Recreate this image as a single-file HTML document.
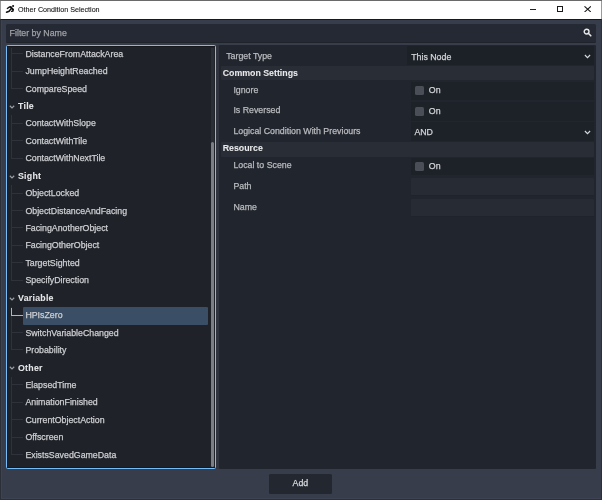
<!DOCTYPE html>
<html><head><meta charset="utf-8"><style>
html,body{margin:0;padding:0;width:602px;height:500px;overflow:hidden;background:#373d4a}
.r{position:absolute}
.t{position:absolute;white-space:nowrap;-webkit-text-stroke:0.25px currentColor;font-family:"Liberation Sans",sans-serif}
</style></head><body><div id="w" style="position:absolute;left:0;top:0;width:602px;height:500px;will-change:transform">
<div class="r" style="left:0.00px;top:0.00px;width:602.00px;height:500.00px;background:#373d4a;"></div>
<div class="r" style="left:0.00px;top:0.00px;width:602.00px;height:19.00px;background:#ffffff;"></div>
<div class="r" style="left:0.00px;top:19.00px;width:602.00px;height:1.00px;background:#131826;"></div>
<div class="r" style="left:0.00px;top:0.00px;width:1.00px;height:500.00px;background:#2b2f37;"></div>
<div class="r" style="left:601.00px;top:0.00px;width:1.00px;height:500.00px;background:#2b2f37;"></div>
<div class="r" style="left:601.00px;top:0.00px;width:1.00px;height:19.00px;background:#9a9a9a;"></div>
<div class="r" style="left:0.00px;top:0.00px;width:1.00px;height:19.00px;background:#9a9a9a;"></div>
<div class="r" style="left:0.00px;top:499.00px;width:602.00px;height:1.00px;background:#2b2f37;"></div>
<div class="r" style="left:1.00px;top:498.00px;width:600.00px;height:1.00px;background:#3d4352;"></div>
<div class="r" style="left:1.00px;top:20.00px;width:1.00px;height:478.00px;background:#3d4352;"></div>
<div class="r" style="left:0.00px;top:0.00px;width:602.00px;height:1.00px;background:#6a6a6a;"></div>
<svg class="r" style="left:4px;top:3px" width="13" height="13" viewBox="0 0 13 13">
<circle cx="9.1" cy="3.0" r="1.05" fill="#111"/>
<path d="M3.3 5.5 L5.6 3.9 L7.3 4.1" stroke="#111" stroke-width="1.3" fill="none" stroke-linejoin="round" stroke-linecap="round"/>
<path d="M6.6 4.1 L9.0 6.5" stroke="#111" stroke-width="1.9" fill="none" stroke-linecap="round"/>
<path d="M9.1 6.6 L9.0 8.0 L7.6 8.4" stroke="#111" stroke-width="1.4" fill="none" stroke-linejoin="round" stroke-linecap="round"/>
<path d="M6.9 6.0 L5.1 8.2 L2.5 9.3" stroke="#111" stroke-width="1.5" fill="none" stroke-linejoin="round" stroke-linecap="round"/>
</svg>
<div class="t" style="left:18.00px;top:5.83px;font-size:8.0px;line-height:8.0px;color:#111111;font-weight:normal;-webkit-text-stroke:0.1px currentColor;transform:scaleX(0.895);transform-origin:0 0">Other Condition Selection</div>
<div class="r" style="left:530.00px;top:9.00px;width:6.00px;height:1.00px;background:#222;"></div>
<div class="r" style="left:556.8px;top:6px;width:4.4px;height:4.4px;border:1px solid #1a1a1a"></div>
<svg class="r" style="left:584px;top:6px" width="7.4" height="6.4" viewBox="0 0 7.4 6.4"><path d="M0.5 0.3 L6.9 6.1 M6.9 0.3 L0.5 6.1" stroke="#1a1a1a" stroke-width="1.05"/></svg>
<div class="r" style="left:6.00px;top:24.00px;width:590.00px;height:18.80px;background:#252933;border-radius:1.5px;box-sizing:border-box;border-bottom:1.5px solid #1f232a"></div>
<div class="t" style="left:9.60px;top:28.55px;font-size:8.8px;line-height:8.8px;color:#9fa2a7;font-weight:normal;">Filter by Name</div>
<svg class="r" style="left:583px;top:28.4px" width="9" height="9" viewBox="0 0 9 9"><circle cx="3.6" cy="3.6" r="2.4" stroke="#e8e8e8" stroke-width="1.4" fill="none"/><path d="M5.3 5.3 L7.8 7.8" stroke="#e8e8e8" stroke-width="1.6" stroke-linecap="round"/></svg>
<div class="r" style="left:5.90px;top:44.80px;width:210.30px;height:424.20px;background:#1f2229;box-sizing:border-box;border:1.4px solid #72bdfa;border-radius:1.5px"></div>
<div class="r" style="left:7.30px;top:46.20px;width:207.50px;height:421.40px;background:transparent;box-sizing:border-box;border:1.2px solid #17191e;border-right:none"></div>
<div class="r" style="left:211.30px;top:47.50px;width:2.90px;height:419.50px;background:#2a2e36;"></div>
<div class="r" style="left:211.00px;top:141.50px;width:3.00px;height:325.00px;background:#7b7e84;border-radius:1.5px"></div>
<div class="t" style="left:25.40px;top:49.65px;font-size:8.8px;line-height:8.8px;color:#cdcfd2;font-weight:normal;">DistanceFromAttackArea</div>
<div class="t" style="left:25.40px;top:67.08px;font-size:8.8px;line-height:8.8px;color:#cdcfd2;font-weight:normal;">JumpHeightReached</div>
<div class="t" style="left:25.40px;top:84.51px;font-size:8.8px;line-height:8.8px;color:#cdcfd2;font-weight:normal;">CompareSpeed</div>
<div class="t" style="left:18.00px;top:102.44px;font-size:8.8px;line-height:8.8px;color:#e6e7e9;font-weight:bold;-webkit-text-stroke:0.05px currentColor;letter-spacing:0.25px">Tile</div>
<svg class="r" style="left:9px;top:104.89px" width="6" height="4" viewBox="0 0 6 4"><path d="M0.8 0.8 L3 2.9 L5.2 0.8" stroke="#9a9da3" stroke-width="1.2" fill="none"/></svg>
<div class="t" style="left:25.40px;top:119.37px;font-size:8.8px;line-height:8.8px;color:#cdcfd2;font-weight:normal;">ContactWithSlope</div>
<div class="t" style="left:25.40px;top:136.80px;font-size:8.8px;line-height:8.8px;color:#cdcfd2;font-weight:normal;">ContactWithTile</div>
<div class="t" style="left:25.40px;top:154.23px;font-size:8.8px;line-height:8.8px;color:#cdcfd2;font-weight:normal;">ContactWithNextTile</div>
<div class="t" style="left:18.00px;top:172.16px;font-size:8.8px;line-height:8.8px;color:#e6e7e9;font-weight:bold;-webkit-text-stroke:0.05px currentColor;letter-spacing:0.25px">Sight</div>
<svg class="r" style="left:9px;top:174.61px" width="6" height="4" viewBox="0 0 6 4"><path d="M0.8 0.8 L3 2.9 L5.2 0.8" stroke="#9a9da3" stroke-width="1.2" fill="none"/></svg>
<div class="t" style="left:25.40px;top:189.09px;font-size:8.8px;line-height:8.8px;color:#cdcfd2;font-weight:normal;">ObjectLocked</div>
<div class="t" style="left:25.40px;top:206.52px;font-size:8.8px;line-height:8.8px;color:#cdcfd2;font-weight:normal;">ObjectDistanceAndFacing</div>
<div class="t" style="left:25.40px;top:223.95px;font-size:8.8px;line-height:8.8px;color:#cdcfd2;font-weight:normal;">FacingAnotherObject</div>
<div class="t" style="left:25.40px;top:241.38px;font-size:8.8px;line-height:8.8px;color:#cdcfd2;font-weight:normal;">FacingOtherObject</div>
<div class="t" style="left:25.40px;top:258.81px;font-size:8.8px;line-height:8.8px;color:#cdcfd2;font-weight:normal;">TargetSighted</div>
<div class="t" style="left:25.40px;top:276.24px;font-size:8.8px;line-height:8.8px;color:#cdcfd2;font-weight:normal;">SpecifyDirection</div>
<div class="t" style="left:18.00px;top:294.17px;font-size:8.8px;line-height:8.8px;color:#e6e7e9;font-weight:bold;-webkit-text-stroke:0.05px currentColor;letter-spacing:0.25px">Variable</div>
<svg class="r" style="left:9px;top:296.62px" width="6" height="4" viewBox="0 0 6 4"><path d="M0.8 0.8 L3 2.9 L5.2 0.8" stroke="#9a9da3" stroke-width="1.2" fill="none"/></svg>
<div class="r" style="left:23.00px;top:307.00px;width:185.20px;height:17.60px;background:#3a4f66;border-radius:1px"></div>
<div class="t" style="left:25.40px;top:311.10px;font-size:8.8px;line-height:8.8px;color:#cdcfd2;font-weight:normal;">HPIsZero</div>
<div class="t" style="left:25.40px;top:328.53px;font-size:8.8px;line-height:8.8px;color:#cdcfd2;font-weight:normal;">SwitchVariableChanged</div>
<div class="t" style="left:25.40px;top:345.96px;font-size:8.8px;line-height:8.8px;color:#cdcfd2;font-weight:normal;">Probability</div>
<div class="t" style="left:18.00px;top:363.89px;font-size:8.8px;line-height:8.8px;color:#e6e7e9;font-weight:bold;-webkit-text-stroke:0.05px currentColor;letter-spacing:0.25px">Other</div>
<svg class="r" style="left:9px;top:366.34px" width="6" height="4" viewBox="0 0 6 4"><path d="M0.8 0.8 L3 2.9 L5.2 0.8" stroke="#9a9da3" stroke-width="1.2" fill="none"/></svg>
<div class="t" style="left:25.40px;top:380.82px;font-size:8.8px;line-height:8.8px;color:#cdcfd2;font-weight:normal;">ElapsedTime</div>
<div class="t" style="left:25.40px;top:398.25px;font-size:8.8px;line-height:8.8px;color:#cdcfd2;font-weight:normal;">AnimationFinished</div>
<div class="t" style="left:25.40px;top:415.68px;font-size:8.8px;line-height:8.8px;color:#cdcfd2;font-weight:normal;">CurrentObjectAction</div>
<div class="t" style="left:25.40px;top:433.11px;font-size:8.8px;line-height:8.8px;color:#cdcfd2;font-weight:normal;">Offscreen</div>
<div class="t" style="left:25.40px;top:450.54px;font-size:8.8px;line-height:8.8px;color:#cdcfd2;font-weight:normal;">ExistsSavedGameData</div>
<div class="r" style="left:11.20px;top:48.00px;width:1.00px;height:40.96px;background:#2f323a;"></div>
<div class="r" style="left:11.20px;top:53.10px;width:11.80px;height:1.00px;background:#2f323a;"></div>
<div class="r" style="left:11.20px;top:70.53px;width:11.80px;height:1.00px;background:#2f323a;"></div>
<div class="r" style="left:11.20px;top:87.96px;width:11.80px;height:1.00px;background:#2f323a;"></div>
<div class="r" style="left:11.20px;top:115.39px;width:1.00px;height:43.29px;background:#2f323a;"></div>
<div class="r" style="left:11.20px;top:122.82px;width:11.80px;height:1.00px;background:#2f323a;"></div>
<div class="r" style="left:11.20px;top:140.25px;width:11.80px;height:1.00px;background:#2f323a;"></div>
<div class="r" style="left:11.20px;top:157.68px;width:11.80px;height:1.00px;background:#2f323a;"></div>
<div class="r" style="left:11.20px;top:185.11px;width:1.00px;height:95.58px;background:#2f323a;"></div>
<div class="r" style="left:11.20px;top:192.54px;width:11.80px;height:1.00px;background:#2f323a;"></div>
<div class="r" style="left:11.20px;top:209.97px;width:11.80px;height:1.00px;background:#2f323a;"></div>
<div class="r" style="left:11.20px;top:227.40px;width:11.80px;height:1.00px;background:#2f323a;"></div>
<div class="r" style="left:11.20px;top:244.83px;width:11.80px;height:1.00px;background:#2f323a;"></div>
<div class="r" style="left:11.20px;top:262.26px;width:11.80px;height:1.00px;background:#2f323a;"></div>
<div class="r" style="left:11.20px;top:279.69px;width:11.80px;height:1.00px;background:#2f323a;"></div>
<div class="r" style="left:11.20px;top:307.12px;width:1.00px;height:43.29px;background:#2f323a;"></div>
<div class="r" style="left:11.20px;top:314.55px;width:11.80px;height:1.00px;background:#2f323a;"></div>
<div class="r" style="left:11.20px;top:331.98px;width:11.80px;height:1.00px;background:#2f323a;"></div>
<div class="r" style="left:11.20px;top:349.41px;width:11.80px;height:1.00px;background:#2f323a;"></div>
<div class="r" style="left:11.20px;top:376.84px;width:1.00px;height:78.15px;background:#2f323a;"></div>
<div class="r" style="left:11.20px;top:384.27px;width:11.80px;height:1.00px;background:#2f323a;"></div>
<div class="r" style="left:11.20px;top:401.70px;width:11.80px;height:1.00px;background:#2f323a;"></div>
<div class="r" style="left:11.20px;top:419.13px;width:11.80px;height:1.00px;background:#2f323a;"></div>
<div class="r" style="left:11.20px;top:436.56px;width:11.80px;height:1.00px;background:#2f323a;"></div>
<div class="r" style="left:11.20px;top:453.99px;width:11.80px;height:1.00px;background:#2f323a;"></div>
<div class="r" style="left:11.10px;top:307.55px;width:1.05px;height:8.00px;background:#b3b6bb;"></div>
<div class="r" style="left:11.10px;top:314.50px;width:11.90px;height:1.05px;background:#b3b6bb;"></div>
<div class="r" style="left:216.20px;top:45.00px;width:2.60px;height:424.00px;background:#2f343f;"></div>
<div class="r" style="left:218.70px;top:45.00px;width:377.30px;height:424.00px;background:#21252d;border-radius:1px"></div>
<div class="r" style="left:407.20px;top:46.40px;width:186.80px;height:19.00px;background:#1c2027;border-radius:1px"></div>
<div class="t" style="left:226.20px;top:52.15px;font-size:8.8px;line-height:8.8px;color:#b9bbbf;font-weight:normal;">Target Type</div>
<div class="t" style="left:411.20px;top:52.55px;font-size:8.8px;line-height:8.8px;color:#d2d4d7;font-weight:normal;">This Node</div>
<svg class="r" style="left:584.0px;top:53.8px" width="7" height="5" viewBox="0 0 7 5"><path d="M0.9 1 L3.5 3.6 L6.1 1" stroke="#d8dadd" stroke-width="1.15" fill="none"/></svg>
<div class="r" style="left:221.00px;top:66.20px;width:373.00px;height:14.20px;background:#292d35;border-radius:1px"></div>
<div class="t" style="left:222.70px;top:68.95px;font-size:8.8px;line-height:8.8px;color:#e9eaec;font-weight:bold;-webkit-text-stroke:0.05px currentColor">Common Settings</div>
<div class="r" style="left:410.50px;top:81.50px;width:183.50px;height:18.30px;background:#1d2128;border-radius:1px"></div>
<div class="r" style="left:415.00px;top:86.45px;width:8.80px;height:8.40px;background:#4a4e57;border-radius:1.5px"></div>
<div class="t" style="left:428.80px;top:85.85px;font-size:8.8px;line-height:8.8px;color:#d2d4d7;font-weight:normal;">On</div>
<div class="t" style="left:233.40px;top:85.55px;font-size:8.8px;line-height:8.8px;color:#b9bbbf;font-weight:normal;">Ignore</div>
<div class="r" style="left:410.50px;top:102.20px;width:183.50px;height:18.40px;background:#1d2128;border-radius:1px"></div>
<div class="r" style="left:415.00px;top:107.20px;width:8.80px;height:8.40px;background:#4a4e57;border-radius:1.5px"></div>
<div class="t" style="left:428.80px;top:106.55px;font-size:8.8px;line-height:8.8px;color:#d2d4d7;font-weight:normal;">On</div>
<div class="t" style="left:233.40px;top:106.25px;font-size:8.8px;line-height:8.8px;color:#b9bbbf;font-weight:normal;">Is Reversed</div>
<div class="r" style="left:411.00px;top:121.80px;width:183.00px;height:19.40px;background:#1d2128;border-radius:1px"></div>
<div class="t" style="left:233.40px;top:127.25px;font-size:8.8px;line-height:8.8px;color:#b9bbbf;font-weight:normal;">Logical Condition With Previours</div>
<div class="t" style="left:414.40px;top:128.15px;font-size:8.8px;line-height:8.8px;color:#d2d4d7;font-weight:normal;">AND</div>
<svg class="r" style="left:584.0px;top:129.6px" width="7" height="5" viewBox="0 0 7 5"><path d="M0.9 1 L3.5 3.6 L6.1 1" stroke="#d8dadd" stroke-width="1.15" fill="none"/></svg>
<div class="r" style="left:221.00px;top:141.80px;width:373.00px;height:15.20px;background:#292d35;border-radius:1px"></div>
<div class="t" style="left:222.70px;top:144.45px;font-size:8.8px;line-height:8.8px;color:#e9eaec;font-weight:bold;-webkit-text-stroke:0.05px currentColor">Resource</div>
<div class="r" style="left:410.50px;top:157.60px;width:183.50px;height:17.60px;background:#1d2128;border-radius:1px"></div>
<div class="r" style="left:415.00px;top:162.20px;width:8.80px;height:8.40px;background:#4a4e57;border-radius:1.5px"></div>
<div class="t" style="left:428.80px;top:161.65px;font-size:8.8px;line-height:8.8px;color:#d2d4d7;font-weight:normal;">On</div>
<div class="t" style="left:233.40px;top:161.35px;font-size:8.8px;line-height:8.8px;color:#b9bbbf;font-weight:normal;">Local to Scene</div>
<div class="r" style="left:411.00px;top:178.00px;width:183.00px;height:18.00px;background:#272b34;border-radius:1px;box-sizing:border-box;border-bottom:1px solid #1f232a"></div>
<div class="t" style="left:233.40px;top:182.15px;font-size:8.8px;line-height:8.8px;color:#b9bbbf;font-weight:normal;">Path</div>
<div class="r" style="left:411.00px;top:199.00px;width:183.00px;height:18.00px;background:#272b34;border-radius:1px;box-sizing:border-box;border-bottom:1px solid #1f232a"></div>
<div class="t" style="left:233.40px;top:202.95px;font-size:8.8px;line-height:8.8px;color:#b9bbbf;font-weight:normal;">Name</div>
<div class="r" style="left:269.00px;top:473.60px;width:63.00px;height:20.00px;background:#232730;border-radius:1.5px"></div>
<div class="t" style="left:292.60px;top:479.05px;font-size:8.8px;line-height:8.8px;color:#d6d8db;font-weight:normal;">Add</div>
</div></body></html>
